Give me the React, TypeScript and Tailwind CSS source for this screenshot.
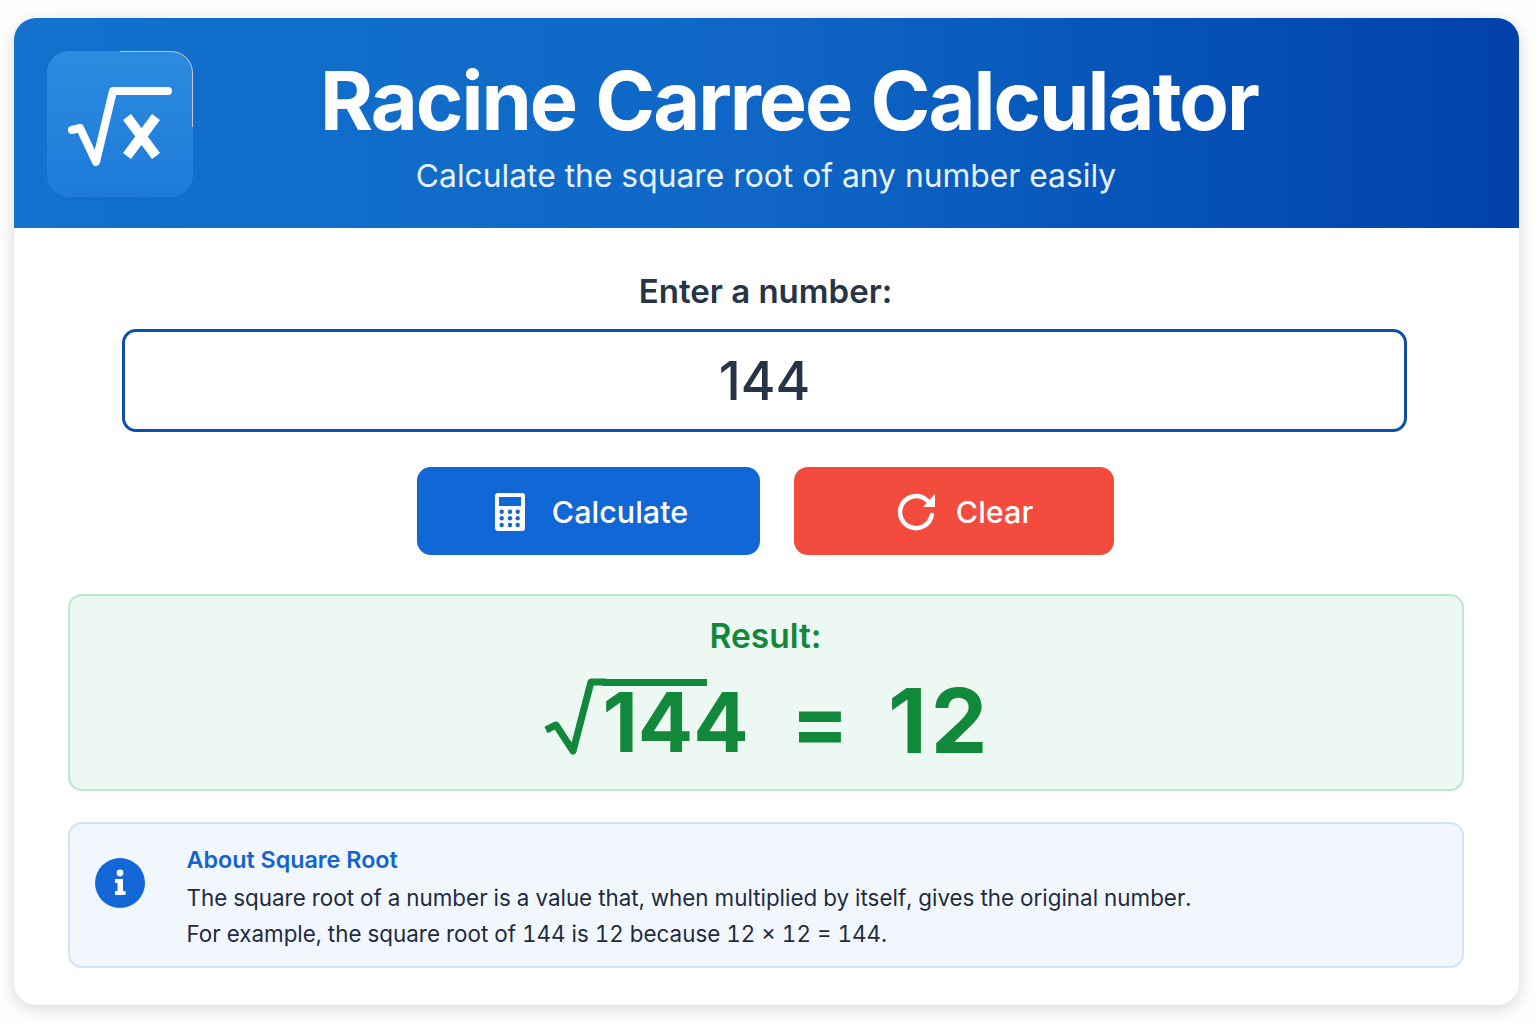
import React from 'react';

const font = "[font-family:Inter,'Noto_Sans',sans-serif]";

const SqrtXIcon = () => (
  <svg width="146" height="146" viewBox="0 0 146 146" fill="none">
    <path d="M73 0.5H124A21.5 21.5 0 0 1 145.5 22V76" stroke="#e3dccb" strokeOpacity="0.8" strokeWidth="1" />
    <path d="M25 79 L33 77 L49 111 L66 40 L121 40" stroke="white" strokeWidth="8" strokeLinecap="round" strokeLinejoin="round" />
    <path d="M80 66 L109 105 M109 66 L80 105" stroke="white" strokeWidth="10" />
  </svg>
);

const CalculatorIcon = () => (
  <svg width="30" height="38" viewBox="0 0 30 38">
    <path
      fillRule="evenodd"
      fill="white"
      d="M3 0H27A3 3 0 0 1 30 3V35A3 3 0 0 1 27 38H3A3 3 0 0 1 0 35V3A3 3 0 0 1 3 0ZM4 4V13H26V4Z"
    />
    {[18.7, 25.3, 32].map((y) =>
      [6.7, 15, 22.7].map((x) => <circle key={`${x}-${y}`} cx={x} cy={y} r="2.2" fill="#1167d6" />)
    )}
  </svg>
);

const ClearIcon = () => (
  <svg width="38" height="40" viewBox="0 0 38 40" fill="none">
    <path d="M29.3 8.7 A16 16 0 1 0 33.8 23" stroke="white" strokeWidth="4.5" strokeLinecap="round" />
    <path d="M37 2 V15 H25 Z" fill="white" />
  </svg>
);

const InfoIcon = () => (
  <svg width="50" height="50" viewBox="0 0 50 50">
    <circle cx="25" cy="25" r="25" fill="#1467d6" />
    <circle cx="25" cy="15" r="3.4" fill="white" />
    <path d="M20 21H28V33H30.5V37H20V33H22.5V25H20Z" fill="white" />
  </svg>
);

export default function App() {
  return (
    <div className={`min-h-[1024px] bg-[#fdfdfd] pl-[14px] pr-[17px] pt-[18px] ${font}`}>
      <div className="h-[987px] overflow-hidden rounded-[22px] bg-white shadow-[0_4px_16px_rgba(0,0,0,0.14)]">
        <header className="flex h-[210px] items-start bg-gradient-to-r from-[#1272cd] via-[#0f66c6] to-[#0341ab] pl-[33px] pt-[33px]">
          <div className="h-[146px] w-[146px] shrink-0 rounded-[22px] bg-gradient-to-b from-[#2b8bdf] to-[#1e7bda]">
            <SqrtXIcon />
          </div>
          <div className="mr-[180px] flex flex-1 flex-col items-center">
            <h1 className="ml-[46px] mt-[4px] text-[81px] leading-[92px] font-bold tracking-[-2px] text-white [word-spacing:2px]">Racine Carree Calculator</h1>
            <p className="mt-[7px] text-[31.8px] leading-[44px] text-[#e6f1fb]">Calculate the square root of any number easily</p>
          </div>
        </header>

        <main className="flex flex-col items-center pr-[2px] pt-[42px]">
          <label className="text-[33px] leading-[42px] font-semibold text-[#263448]">Enter a number:</label>
          <div className="mr-[2px] mt-[17px] flex h-[103px] w-[1285px] items-center justify-center rounded-[14px] border-[3px] border-[#0e4fae] pt-[3px] text-[53px] font-medium text-[#263448]">
            144
          </div>

          <div className="mt-[35px] flex gap-[34px]">
            <button className="flex h-[88px] w-[343px] items-center justify-center gap-[27px] rounded-[14px] bg-[#1167d6] pl-[6px] pt-[2px] text-[30.5px] font-medium text-white">
              <CalculatorIcon />
              Calculate
            </button>
            <button className="flex h-[88px] w-[320px] items-center justify-center gap-[20px] rounded-[14px] bg-[#f44b3f] pl-[23px] pt-[2px] text-[30.5px] font-medium text-white">
              <ClearIcon />
              Clear
            </button>
          </div>

          <section className="mt-[39px] flex h-[197px] w-[1396px] flex-col items-center rounded-[14px] border-2 border-[#bde6cb] bg-[#eef8f2] text-[#12883a]">
            <h2 className="mt-[20px] text-[33.5px] leading-[40px] font-semibold">Result:</h2>
            <div className="ml-[5px] mt-[22px] flex items-end">
              <svg width="62" height="82" viewBox="0 0 62 82" fill="none" className="mr-[-4px]">
                <path d="M2 52 L12 47 L29 73 L47 4 H62" stroke="#12883a" strokeWidth="7" strokeLinejoin="round" />
              </svg>
              <span className="relative mb-[-4px] text-[82px] leading-[82px] font-bold">
                <span className="absolute left-0 top-[-3.5px] h-[7px] w-[105px] bg-[#12883a]" />
                144
              </span>
              <span className="mb-[-2px] ml-[42px] text-[86px] leading-[82px] font-bold">=</span>
              <span className="mb-[-2px] ml-[39px] text-[90px] leading-[82px] font-bold tracking-[4px]">12</span>
            </div>
          </section>

          <section className="mt-[31px] flex h-[146px] w-[1396px] items-start rounded-[14px] border-2 border-[#cfe3fb] bg-[#f2f7fe] pl-[25px]">
            <div className="mt-[34px]">
              <InfoIcon />
            </div>
            <div className="ml-[42px] mt-[19px]">
              <h3 className="text-[23.3px] leading-[34px] font-semibold text-[#1264d4]">About Square Root</h3>
              <p className="mt-[3px] text-[22.4px] leading-[36px] text-[#1f2c40] tabular-nums">
                The square root of a number is a value that, when multiplied by itself, gives the original number.
                <br />
                For example, the square root of 144 is 12 because 12 × 12 = 144.
              </p>
            </div>
          </section>
        </main>
      </div>
    </div>
  );
}
